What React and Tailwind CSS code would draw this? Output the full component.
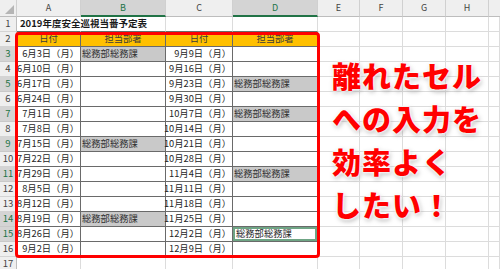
import React from "react";

const rows = [
  ["6月3日（月）", "総務部総務課", "9月9日（月）", ""],
  ["6月10日（月）", "", "9月16日（月）", ""],
  ["6月17日（月）", "", "9月23日（月）", "総務部総務課"],
  ["6月24日（月）", "", "9月30日（月）", ""],
  ["7月1日（月）", "", "10月7日（月）", "総務部総務課"],
  ["7月8日（月）", "", "10月14日（月）", ""],
  ["7月15日（月）", "総務部総務課", "10月21日（月）", ""],
  ["7月22日（月）", "", "10月28日（月）", ""],
  ["7月29日（月）", "", "11月4日（月）", "総務部総務課"],
  ["8月5日（月）", "", "11月11日（月）", ""],
  ["8月12日（月）", "", "11月18日（月）", ""],
  ["8月19日（月）", "総務部総務課", "11月25日（月）", ""],
  ["8月26日（月）", "", "12月2日（月）", "総務部総務課"],
  ["9月2日（月）", "", "12月9日（月）", ""],
];

const selectedRows = [3, 5, 7, 9, 11, 14, 15];

function RowHead({ n }) {
  const sel = selectedRows.includes(n);
  return (
    <div
      className={
        sel
          ? "flex items-center justify-center border-r border-b border-r-[#9fb8a8] border-b-[#c9c9c9] bg-[#d4d4d4] text-[#217346] text-[9.5px] leading-none"
          : "flex items-center justify-center border-r border-b border-r-[#bdbdbd] border-b-[#d4d4d4] bg-[#efefef] text-[#444] text-[9.5px] leading-none"
      }
    >
      {n}
    </div>
  );
}

function Empty() {
  return <div className="border-r border-b border-[#dcdcdc] bg-white" />;
}

function EmptyCols() {
  return (
    <>
      <Empty />
      <Empty />
      <Empty />
      <Empty />
      <Empty />
    </>
  );
}

function DateCell({ text }) {
  return (
    <div className="flex items-center justify-end whitespace-nowrap border-r border-b border-[#6a6a6a] bg-white pr-[1px] text-[9.3px] leading-none text-[#262626]">
      {text}
    </div>
  );
}

function DeptCell({ text, active }) {
  if (active) {
    return (
      <div className="flex items-center whitespace-nowrap border-r border-b border-[#6a6a6a] bg-white">
        <div className="flex h-full w-full items-center border-2 border-[#6fa585] pl-[1px] text-[9.3px] leading-none text-[#262626]">
          {text}
        </div>
      </div>
    );
  }
  if (text) {
    return (
      <div className="flex items-center whitespace-nowrap border-r border-b border-[#6a6a6a] bg-[#c9c9c9] pl-[1px] text-[9.3px] leading-none text-[#303030]">
        {text}
      </div>
    );
  }
  return <div className="border-r border-b border-[#6a6a6a] bg-white" />;
}

export default function App() {
  return (
    <div className="relative h-[269px] w-[500px] overflow-hidden bg-white font-['Noto_Sans_CJK_JP',sans-serif]">
      <div className="grid grid-cols-[17px_64px_85px_67px_85px_42px_43px_43px_43px_1fr] grid-rows-[17px_repeat(17,15px)]">
        {/* column header row */}
        <div className="relative border-r border-b border-r-[#d0d0d0] border-b-[#bdbdbd] bg-[#efefef]">
          <svg className="absolute right-[2px] bottom-[2px]" width="9" height="9" viewBox="0 0 9 9">
            <polygon points="9,0 9,9 0,9" fill="#b5b5b5" />
          </svg>
        </div>
        <div className="flex items-center justify-center border-r border-b border-r-[#d0d0d0] border-b-[#bdbdbd] bg-[#efefef] text-[9px] text-[#444]">A</div>
        <div className="flex items-center justify-center border-r border-b-2 border-r-[#d0d0d0] border-b-[#217346] bg-[#d4d4d4] text-[9px] text-[#217346]">B</div>
        <div className="flex items-center justify-center border-r border-b border-r-[#d0d0d0] border-b-[#bdbdbd] bg-[#efefef] text-[9px] text-[#444]">C</div>
        <div className="flex items-center justify-center border-r border-b-2 border-r-[#d0d0d0] border-b-[#217346] bg-[#d4d4d4] text-[9px] text-[#217346]">D</div>
        <div className="flex items-center justify-center border-r border-b border-r-[#d0d0d0] border-b-[#bdbdbd] bg-[#efefef] text-[9px] text-[#444]">E</div>
        <div className="flex items-center justify-center border-r border-b border-r-[#d0d0d0] border-b-[#bdbdbd] bg-[#efefef] text-[9px] text-[#444]">F</div>
        <div className="flex items-center justify-center border-r border-b border-r-[#d0d0d0] border-b-[#bdbdbd] bg-[#efefef] text-[9px] text-[#444]">G</div>
        <div className="flex items-center justify-center border-r border-b border-r-[#d0d0d0] border-b-[#bdbdbd] bg-[#efefef] text-[9px] text-[#444]">H</div>
        <div className="border-b border-b-[#bdbdbd] bg-[#efefef]" />

        {/* row 1 */}
        <RowHead n={1} />
        <div className="relative z-10 flex items-center whitespace-nowrap border-r border-b border-r-white border-b-[#6a6a6a] bg-white pl-[3px] text-[9.5px] font-bold leading-none text-[#1a1a1a]">
          2019年度安全巡視当番予定表
        </div>
        <div className="border-r border-b border-r-[#dcdcdc] border-b-[#6a6a6a] bg-white" />
        <div className="border-r border-b border-r-[#dcdcdc] border-b-[#6a6a6a] bg-white" />
        <div className="border-r border-b border-r-[#dcdcdc] border-b-[#6a6a6a] bg-white" />
        <EmptyCols />

        {/* row 2 */}
        <RowHead n={2} />
        <div className="flex items-center justify-center border-r border-b border-[#6a6a6a] bg-[#ffc000] text-[9.3px] leading-none text-[#3a3a3a]">日付</div>
        <div className="flex items-center justify-center border-r border-b border-[#6a6a6a] bg-[#ffc000] text-[9.3px] leading-none text-[#3a3a3a]">担当部署</div>
        <div className="flex items-center justify-center border-r border-b border-[#6a6a6a] bg-[#ffc000] text-[9.3px] leading-none text-[#3a3a3a]">日付</div>
        <div className="flex items-center justify-center border-r border-b border-[#6a6a6a] bg-[#ffc000] text-[9.3px] leading-none text-[#3a3a3a]">担当部署</div>
        <EmptyCols />

        {rows.map((r, i) => {
          const n = i + 3;
          return (
            <React.Fragment key={n}>
              <RowHead n={n} />
              <DateCell text={r[0]} />
              <DeptCell text={r[1]} />
              <DateCell text={r[2]} />
              <DeptCell text={r[3]} active={n === 15} />
              <EmptyCols />
            </React.Fragment>
          );
        })}

        {/* row 17 */}
        <RowHead n={17} />
        <Empty />
        <Empty />
        <Empty />
        <Empty />
        <EmptyCols />
      </div>

      {/* red highlight frame */}
      <div className="pointer-events-none absolute left-[15px] top-[32px] z-20 h-[226px] w-[305px] rounded-[4px] border-[3px] border-[#ff0000]" />

      {/* headline overlay */}
      <div className="absolute left-[332px] top-[54px] z-20 whitespace-nowrap text-[29px] font-black leading-[43px] tracking-[1px] text-[#ff0000] [text-shadow:0_0_2px_#fff,0_0_3px_#fff,0_0_4px_#fff,1px_2px_5px_rgba(0,0,0,0.35)]">
        <div>離れたセル</div>
        <div>への入力を</div>
        <div>効率よく</div>
        <div>したい！</div>
      </div>
    </div>
  );
}
